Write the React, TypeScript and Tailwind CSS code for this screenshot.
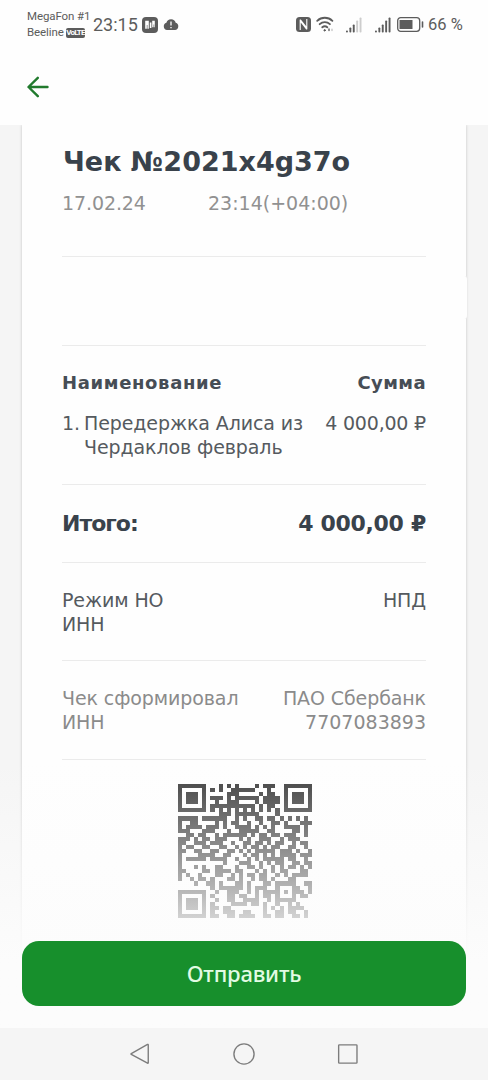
import type { ReactNode } from 'react';

const qrRows = [
  "#######...#.#.#....#.###..#######",
  "#.....#.#.#..######...#...#.....#",
  "#.###.#.....###.....#.##..#.###.#",
  "#.###.#.###.#.######.####.#.###.#",
  "#.###.#..#..###....#.####.#.###.#",
  "#.....#.###########.#.##..#.....#",
  "#######.#.#.#.#.#.#.#.#.#.#######",
  "..........###.######....#........",
  "#####.######..#.#..##.##.#.#.#.#.",
  "#..##....#.#.##..#..#..##.#...###",
  "#.####.###.#..####.#.#.#..####.#.",
  "###...###...#..#####..##....##.#.",
  "..##.##..#.######.#.##.##.###..#.",
  "###.#.##.###...#.#..###..#.###...",
  "##..###.###..#..##.##.#.##..#.##.",
  "#.##..##..##..#.#.##.#.##..##..#.",
  "##..##..##..##.#.#.#####.###.#..#",
  "#....####..##...#.##.#.#.####.###",
  "#.#####.####..#..#.#.#####.##..#.",
  "#..........#...###..#.#.##..##.##",
  "#...#.#..##...#..##.#..#.#.##.#.#",
  "##....##.####.##...#.#.#.##...##.",
  "#.#..#...##..#.#.##.##..#.#.####.",
  "#..#.##.#...##.#..#.##.#...##....",
  "....#..##.#...##.#...##.#####..##",
  "........#.######.#.###..#...##..#",
  "#######..#..###..#.#.####.#.###.#",
  "#.....#.#...##.##..#.##.#...#.##.",
  "#.###.#..#..##..####..#.#####....",
  "#.###.#.#....####.##.#..#..#.#...",
  "#.###.#.##.##........#.#.#.####..",
  "#.....#.#..###..##...#..##.##..#.",
  "#######.##..##.####..##.##..##.#.",
];

const qrPath = qrRows
  .map((row, y) =>
    [...row.matchAll(/#+/g)].map((run) => `M${run.index} ${y}h${run[0].length}v1h-${run[0].length}z`).join('')
  )
  .join('');

const QrCode = () => (
  <svg
    className="w-[134px] h-[134px] text-[#373737]"
    viewBox="0 0 33 33"
    shapeRendering="crispEdges"
    fill="currentColor"
  >
    <path d={qrPath} />
  </svg>
);

const SignalBars = ({ active }: { active: number }) => (
  <svg className="w-4 h-4" viewBox="0 0 16 16" fill="#5c5c5c">
    {[2, 5, 8, 12, 15].map((height, i) => (
      <rect
        key={height}
        x={i * 3.4}
        y={15.5 - height}
        width="1.9"
        height={height}
        rx="0.8"
        opacity={i < active ? 1 : 0.3}
      />
    ))}
  </svg>
);

const StatusBar = () => (
  <div className="flex items-start h-12 pl-[27px] text-[#5c5c5c] font-[Roboto,sans-serif]">
    <div className="pt-[9px] w-[66px] shrink-0 text-[11.5px] leading-[15px] whitespace-nowrap">
      <div className="tracking-[-0.1px]">MegaFon #1</div>
      <div className="flex items-center pt-px">
        <span className="w-9 tracking-[-0.1px]">Beeline</span>
        <span className="flex justify-center ml-[3px] w-[19px] h-[10px] rounded-xs bg-[#5c5c5c] text-white text-[8px] leading-[10px] font-bold tracking-[-0.8px]">
          VoLTE
        </span>
      </div>
    </div>
    <div className="mt-[13px] w-[49px] text-[18px] leading-6 whitespace-nowrap">23:15</div>
    <svg className="mt-[17px] w-4 h-4" viewBox="0 0 16 16">
      <rect width="16" height="16" rx="4" fill="#5c5c5c" />
      <path d="M3.2 3.8h3.6v8H3.2zM7.8 5.5h1.6V11H7.8zM10.2 3.8h2.6v6.4h-2.6z" fill="white" />
      <path d="M5.2 8v4M11.8 7.5v3.5" stroke="#5c5c5c" strokeWidth="0.6" />
    </svg>
    <svg className="ml-[5px] mt-[18px] w-4 h-3" viewBox="0 0 16 12">
      <path d="M4 12a3.7 3.7 0 0 1-.6-7.2A4.8 4.8 0 0 1 12.7 4.8 3.7 3.7 0 0 1 12 12z" fill="#5c5c5c" />
      <path d="M8 3.5v4M8 9v1.3" stroke="white" strokeWidth="1.3" />
    </svg>
    <svg className="ml-[117px] mt-[17px] w-[15px] h-[15px]" viewBox="0 0 15 15">
      <rect width="15" height="15" rx="3.5" fill="#5c5c5c" />
      <path d="M4.2 13V4l6.6 8.3M4.2 2.6l6.6 8.3V2" fill="none" stroke="white" strokeWidth="1.1" />
    </svg>
    <svg className="ml-[5px] mt-4 w-[18px] h-4" viewBox="0 0 18 16" fill="none" stroke="#5c5c5c" strokeWidth="1.8" strokeLinecap="round">
      <path d="M1.2 4.8a11 11 0 0 1 15.2 0M3.7 8.2a7.2 7.2 0 0 1 10.2 0M6.3 11.3a3.8 3.8 0 0 1 5 0" />
      <circle cx="8.6" cy="14.3" r="0.7" fill="#5c5c5c" strokeWidth="1" />
      <path d="M13 13v1.6" strokeWidth="1.4" />
      <path d="M16 13v1.6" strokeWidth="1.2" opacity="0.4" />
    </svg>
    <div className="ml-3 mt-[17px]">
      <SignalBars active={3} />
    </div>
    <div className="ml-[13px] mt-[17px]">
      <SignalBars active={5} />
    </div>
    <svg className="ml-[6px] mt-[17px] w-[27px] h-[15px] shrink-0" viewBox="0 0 27 15">
      <rect x="0.7" y="0.7" width="22" height="13.6" rx="3" fill="none" stroke="#5c5c5c" strokeWidth="1.3" />
      <rect x="2.5" y="3" width="13" height="9" fill="#5c5c5c" />
      <path d="M25.5 5v5" stroke="#5c5c5c" strokeWidth="1.6" strokeLinecap="round" />
    </svg>
    <div className="ml-[4px] mt-[13px] text-[16.5px] leading-6 whitespace-nowrap">66 %</div>
  </div>
);

const Section = ({ className, children }: { className: string; children?: ReactNode }) => (
  <div className={`border-b border-[#ebebeb] text-[19px] leading-6 tracking-[-0.1px] ${className}`}>{children}</div>
);

const Receipt = () => (
  <div className="h-[903px] mx-[22px] px-10 bg-[#fefefe] shadow-[0_0_3px_rgba(0,0,0,0.2)] text-[#555a5f] font-['DejaVu_Sans',sans-serif] whitespace-nowrap">
    <Section className="h-[132px] pt-[19px]">
      <h1 className="pl-px text-[27px] leading-9 font-bold tracking-normal text-[#39424b]">Чек №2021x4g37o</h1>
      <div className="flex mt-[11px] text-[#919191]">
        <span className="w-[146px]">17.02.24</span>
        <span className="tracking-normal">23:14(+04:00)</span>
      </div>
    </Section>
    <Section className="h-[89px]" />
    <Section className="h-[139px] pt-[25px]">
      <div className="flex justify-between text-[18px] font-bold text-[#464d55]">
        <span className="tracking-[0.65px]">Наименование</span>
        <span className="tracking-[0.4px]">Сумма</span>
      </div>
      <div className="flex justify-between mt-4">
        <div className="flex">
          <span className="w-[22px]">1.</span>
          <span>
            Передержка Алиса из
            <br />
            Чердаклов февраль
          </span>
        </div>
        <span className="tracking-[-0.2px]">4 000,00 ₽</span>
      </div>
    </Section>
    <Section className="h-[78px] pt-[27px]">
      <div className="flex justify-between text-[22px] font-bold text-[#39424b]">
        <span className="tracking-[-1px]">Итого:</span>
        <span className="tracking-[-0.3px]">4 000,00 ₽</span>
      </div>
    </Section>
    <Section className="h-[98px] pt-[25px]">
      <div className="flex justify-between">
        <span>Режим НО</span>
        <span>НПД</span>
      </div>
      <div>ИНН</div>
    </Section>
    <Section className="h-[99px] pt-[25px] text-[#8b8b8b]">
      <div className="flex justify-between">
        <span>Чек сформировал</span>
        <span>ПАО Сбербанк</span>
      </div>
      <div className="flex justify-between">
        <span>ИНН</span>
        <span className="tracking-normal">7707083893</span>
      </div>
    </Section>
    <div className="flex justify-center pt-6 pl-px">
      <QrCode />
    </div>
  </div>
);

const navShapes = [
  <path key="back" d="M21 2v19.5q0 .8-.8.4L2.5 12.5q-.8-.5 0-1L20.2 1.6q.8-.4.8.4z" />,
  <circle key="home" cx="12" cy="12" r="11" />,
  <rect key="recent" x="1.8" y="2" width="20" height="20" rx="0.8" />,
];

export default function App() {
  return (
    <div className="flex flex-col w-[488px] h-[1080px] overflow-hidden bg-[#fefefe]">
      <header className="h-[125px] shrink-0">
        <StatusBar />
        <svg className="ml-[27px] mt-7 w-[22px] h-[22px]" viewBox="0 0 22 22" fill="none" stroke="#217a2d" strokeWidth="2.4" strokeLinecap="round" strokeLinejoin="round">
          <path d="M20.5 11H1.7M10.8 1.8L1.5 11l9.3 9.2" />
        </svg>
      </header>
      <main className="relative h-[903px] shrink-0 overflow-hidden bg-[#f5f5f5]">
        <Receipt />
        <div className="absolute right-5 top-[151px] w-2 h-[43px] rounded-r-sm bg-[#fefefe] border-r border-[#ececec]" />
        <div className="absolute inset-x-0 bottom-0 h-[268px] bg-linear-to-b from-[#fcfcfc]/0 to-[#fcfcfc] to-75%" />
        <button className="absolute left-[22px] right-[22px] bottom-[22px] h-[65px] rounded-[17px] bg-[#178f2c] text-[#e2fbe4] text-[22px] font-medium tracking-[-0.2px] font-['Noto_Sans',sans-serif]">
          Отправить
        </button>
      </main>
      <nav className="flex items-center justify-center gap-[82px] h-[52px] bg-[#f5f5f5]">
        {navShapes.map((shape) => (
          <svg key={shape.key} className="w-[22px] h-6" viewBox="0 0 24 24" fill="none" stroke="#7c7c7c" strokeWidth="1.5">
            {shape}
          </svg>
        ))}
      </nav>
    </div>
  );
}
